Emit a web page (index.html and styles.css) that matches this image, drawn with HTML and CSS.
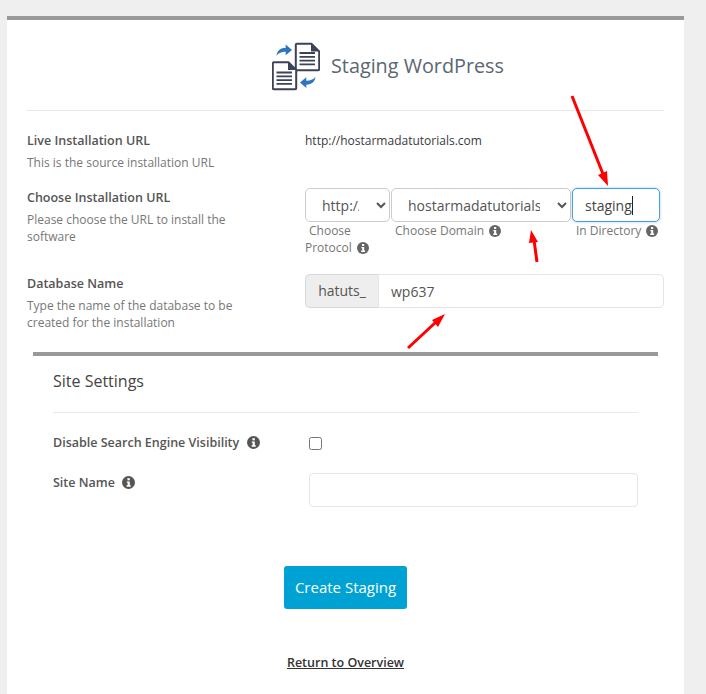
FILE: index.html
```html
<!DOCTYPE html>
<html lang="en">
    <head>
        <meta charset="UTF-8">
        <meta name="viewport" content="width=device-width, initial-scale=1.0">
        <title>Staging WordPress</title>
        <link rel="stylesheet" href="styles.css">
    </head>
    <body>
        <svg class="hidden">
            <symbol id="info" viewBox="0 0 12 12">
                <circle cx="6" cy="6" r="6" fill="currentColor"/>
                <rect x="5" y="2" width="2.2" height="2" fill="#fff"/>
                <path d="M4.4 5h2.8v3.6h.9V10H4.2V8.6h1V6.3h-.8z" fill="#fff"/>
            </symbol>
        </svg>

        <div class="card">
            <div class="header">
                <svg class="logo" width="48" height="50" viewBox="0 0 48 50">
                    <g fill="#fff" stroke="#3c4257" stroke-width="2" stroke-linejoin="round">
                        <path d="M24.8 2.800h14.600l7.800 7.600v17.800a1 1 0 0 1-1 1H24.800a1 1 0 0 1-1-1V3.800a1 1 0 0 1 1-1z"/>
                        <path d="M1.800 21.300h14.600l7.800 7.600v18.300a1 1 0 0 1-1 1H1.800a1 1 0 0 1-1-1V22.300a1 1 0 0 1 1-1z"/>
                    </g>
                    <path d="M39 2.800l8 7.600h-8zM16 21.300l8 7.600h-8z" fill="#3c4257"/>
                    <path d="M27.500 12h15.500M27.500 15.800h15.500M27.500 19.600h15.500M27.500 23.400h15.500M4.500 31.500h15.500M4.500 35.300h15.500M4.500 39.100h15.500M4.500 42.900h15.500" stroke="#3c4257" stroke-width="1.800"/>
                    <path d="M4.500 14.500c.6-5 4.500-7.700 9.200-7.700V3.500l6.300 5.500-6.300 5.300v-3.500c-3.500-.2-6.700 1-9.200 3.700z" fill="#2c76bd"/>
                    <path d="M43.500 36c-.6 5-4.500 7.700-9.200 7.700V47l-6.300-5.500 6.300-5.300v3.500c3.500.2 6.700-1 9.200-3.700z" fill="#2c76bd"/>
                </svg>
                <h2 class="title">Staging WordPress</h2>
            </div>

            <div class="row rowLive">
                <div class="rowLabel">
                    <label>Live Installation URL</label>
                    <p>This is the source installation URL</p>
                </div>
                <div class="liveUrl">http://hostarmadatutorials.com</div>
            </div>

            <div class="row rowChoose">
                <div class="rowLabel">
                    <label>Choose Installation URL</label>
                    <p>Please choose the URL to install the software</p>
                </div>
                <div class="urlFields">
                    <div class="urlField protocol">
                        <select class="box"><option>http://</option></select>
                        <span class="hint hintProtocol">Choose Protocol <svg class="info"><use href="#info"/></svg></span>
                    </div>
                    <div class="urlField domain">
                        <select class="box"><option>hostarmadatutorials.com</option></select>
                        <span class="hint hintDomain">Choose Domain <svg class="info"><use href="#info"/></svg></span>
                    </div>
                    <div class="urlField directory">
                        <div class="dirBox">
                            <input class="box focused" type="text" value="staging">
                            <span class="caret"></span>
                        </div>
                        <span class="hint hintDirectory">In Directory <svg class="info"><use href="#info"/></svg></span>
                    </div>
                </div>
            </div>

            <div class="row rowDatabase">
                <div class="rowLabel">
                    <label>Database Name</label>
                    <p>Type the name of the database to be created for the installation</p>
                </div>
                <div class="inputGroup">
                    <span class="prefix">hatuts_</span>
                    <input class="dbInput" type="text" value="wp637">
                </div>
            </div>

            <div class="settings">
                <h3 class="settingsTitle">Site Settings</h3>
                <div class="settingRow settingSearch">
                    <label>Disable Search Engine Visibility <svg class="info infoDark"><use href="#info"/></svg></label>
                    <input class="check" type="checkbox">
                </div>
                <div class="settingRow settingName">
                    <label>Site Name <svg class="info infoDark"><use href="#info"/></svg></label>
                    <input class="nameInput" type="text">
                </div>
            </div>

            <div class="actions">
                <button type="submit" class="button">Create Staging</button>
                <a href="#" class="returnLink">Return to Overview</a>
            </div>
        </div>

        <!-- red annotation arrows drawn on top of the screenshot -->
        <svg class="arrows" width="706" height="694" viewBox="0 0 706 694">
            <g stroke="#fe0000" stroke-width="3" fill="#fe0000">
                <line x1="572" y1="96" x2="603" y2="174"/>
                <path d="M608 186l-10-11 9-4z" stroke="none"/>
                <line x1="537" y1="262" x2="534" y2="240"/>
                <path d="M531 230l7 12-9 1z" stroke="none"/>
                <line x1="408" y1="348" x2="436" y2="322"/>
                <path d="M445 314l-7 13-6-7z" stroke="none"/>
            </g>
        </svg>
    </body>
</html>
```

FILE: styles.css
```css
* {
    box-sizing: border-box;
}
body {
    margin: 0;
    height: 694px;
    overflow: hidden;
    position: relative;
    background-color: #efefef;
    font-family: "Open Sans", sans-serif;
    color: #444;
}
.hidden {
    display: none;
}
.card {
    margin: 16px 22px 0 7px;
    height: 678px;
    padding: 0 20px;
    background-color: #fff;
    border-top: 4px solid #999;
}
.header {
    display: flex;
    align-items: center;
    height: 91px;
    padding: 1px 0 0 245px;
    border-bottom: 1px solid #eaeaea;
}
.logo {
    margin-right: 11px;
}
.title {
    margin: 0;
    font-size: 19.8px;
    font-weight: 400;
    color: #5b6770;
}
.row {
    display: grid;
    grid-template-columns: 278px 359px;
}
.rowLive {
    margin-top: 20px;
    height: 45px;
}
.rowChoose {
    margin-top: 12px;
    height: 85px;
}
.rowDatabase {
    margin-top: 1px;
    height: 78px;
}
.rowLabel label {
    display: block;
    margin-top: 1px;
    font-size: 12.5px;
    line-height: 18px;
    font-weight: 600;
    color: #555;
}
.rowLabel p {
    margin: 4px 0 0 0;
    width: 235px;
    font-size: 12px;
    line-height: 17px;
    color: #777;
}
.liveUrl {
    padding-top: 1px;
    font-size: 12px;
    line-height: 18px;
    color: #3a3a44;
}
.urlFields {
    display: flex;
}
.urlField {
    display: flex;
    flex-direction: column;
}
.protocol {
    width: 86px;
}
.domain {
    width: 181px;
}
.directory {
    width: 88px;
}
.box {
    height: 34px;
    width: 100%;
    font-family: "Open Sans", sans-serif;
    font-size: 14px;
    color: #555;
    background-color: #fff;
    border: 1px solid #ccc;
    border-radius: 5px;
    padding-left: 12px;
}
select.box {
    padding-right: 14px;
}
.protocol .box {
    width: 85px;
}
.domain .box {
    width: 180px;
}
.dirBox {
    position: relative;
}
.focused {
    border-color: #4a9fe0;
    box-shadow: 0 0 3px rgba(74, 159, 224, 0.5);
    outline: none;
    color: #444;
}
.caret {
    position: absolute;
    left: 60px;
    top: 8px;
    width: 1px;
    height: 19px;
    background-color: #222;
}
.hint {
    font-size: 12px;
    line-height: 17px;
    color: #777;
}
.hintProtocol {
    width: 75px;
    text-indent: 4px;
}
.hintDomain {
    padding-left: 4px;
}
.hintDirectory {
    padding-left: 4px;
}
.info {
    width: 12px;
    height: 12px;
    margin-left: 2px;
    vertical-align: -2px;
    color: #666;
}
.infoDark {
    width: 13px;
    height: 13px;
    margin-left: 4px;
    color: #555;
}
.inputGroup {
    display: flex;
    height: 34px;
}
.prefix {
    width: 73px;
    font-size: 14px;
    line-height: 32px;
    text-align: center;
    color: #555;
    background-color: #eee;
    border: 1px solid #d8d8d8;
    border-right: none;
    border-radius: 5px 0 0 5px;
}
.dbInput {
    flex: 1;
    min-width: 0;
    font-family: "Open Sans", sans-serif;
    font-size: 14px;
    color: #555;
    padding-left: 12px;
    border: 1px solid #e5e5e5;
    border-radius: 0 5px 5px 0;
}
.settings {
    margin: 0 6px;
    padding: 0 20px;
    border-top: 4px solid #999;
}
.settingsTitle {
    margin: 0;
    height: 57px;
    padding-top: 14px;
    font-size: 16px;
    line-height: 22px;
    font-weight: 400;
    color: #444;
    border-bottom: 1px solid #eaeaea;
}
.settingRow {
    display: grid;
    grid-template-columns: 256px 329px;
}
.settingRow label {
    font-size: 12.5px;
    line-height: 18px;
    font-weight: 600;
    color: #555;
}
.settingSearch {
    margin-top: 21px;
    height: 39px;
}
.check {
    margin: 3px 0 0 0;
    width: 13px;
    height: 13px;
}
.nameInput {
    height: 34px;
    border: 1px solid #e5e5e5;
    border-radius: 4px;
}
.settingName label {
    margin-top: 1px;
}
.actions {
    display: flex;
    flex-direction: column;
    align-items: center;
    margin-top: 59px;
}
.button {
    width: 123px;
    height: 43px;
    padding: 0 0 2px 0;
    background-color: #00a2d3;
    color: white;
    border: none;
    border-radius: 3px;
    font-family: "Open Sans", sans-serif;
    font-size: 15px;
    cursor: pointer;
}
.returnLink {
    margin-top: 45px;
    font-size: 12.5px;
    line-height: 18px;
    font-weight: 600;
    color: #333;
}
.arrows {
    position: absolute;
    left: 0;
    top: 0;
    pointer-events: none;
}
```
